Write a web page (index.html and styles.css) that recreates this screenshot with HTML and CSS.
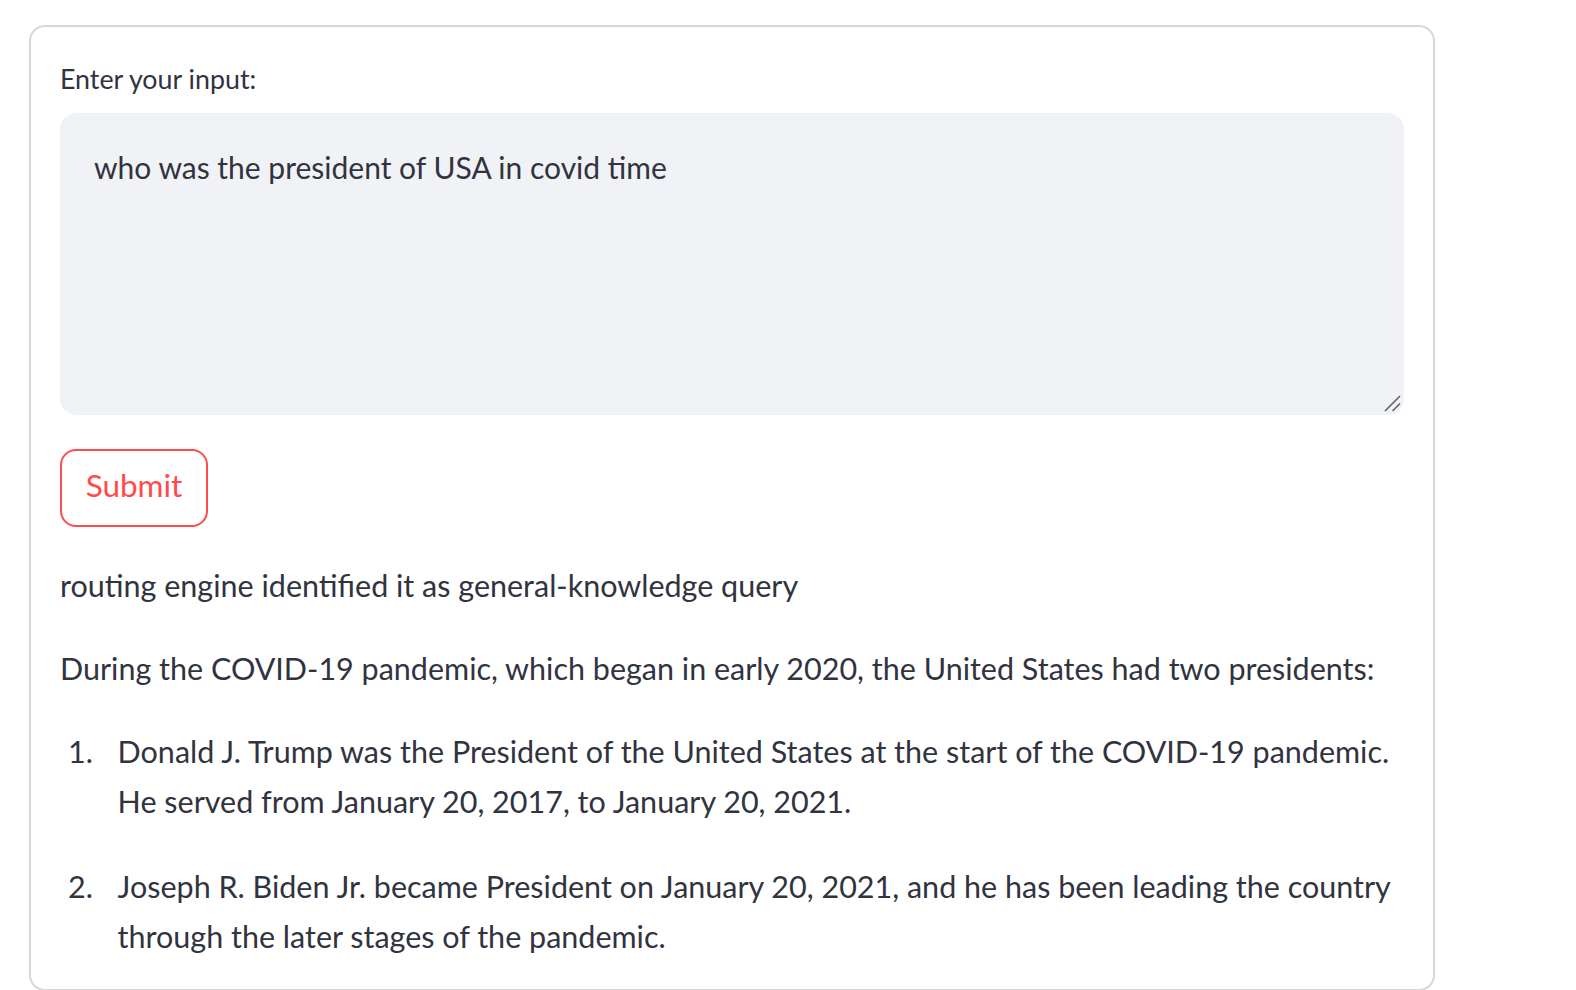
FILE: index.html
```html
<!DOCTYPE html>
<html lang="en">
<head>
<meta charset="utf-8">
<title>Query</title>
<link rel="stylesheet" href="styles.css">
</head>
<body>
<div class="page">
  <form class="card">
    <label class="field-label" for="q">Enter your input:</label>
    <div class="textarea-wrap">
      <textarea id="q" class="input">who was the president of USA in covid time</textarea>
      <svg class="resizer" width="18" height="18" viewBox="0 0 18 18" aria-hidden="true">
        <line x1="2" y1="16" x2="17" y2="1" stroke="#5f6068" stroke-width="1.6"/>
        <line x1="9.5" y1="16" x2="17" y2="8.5" stroke="#5f6068" stroke-width="1.6"/>
      </svg>
    </div>
    <div class="actions">
      <button type="button" class="submit">Submit</button>
    </div>
    <div class="output">
      <p>routing engine identified it as general-knowledge query</p>
      <p>During the COVID-19 pandemic, which began in early 2020, the United States had two presidents:</p>
      <ol class="answers">
        <li><span>Donald J. Trump was the President of the United States at the start of the COVID-19 pandemic. He served from January 20, 2017, to January 20, 2021.</span></li>
        <li><span>Joseph R. Biden Jr. became President on January 20, 2021, and he has been leading the country through the later stages of the pandemic.</span></li>
      </ol>
    </div>
  </form>
</div>
</body>
</html>
```
FILE: styles.css
```css
html, body {
  margin: 0;
  padding: 0;
  background: #ffffff;
}
body {
  font-family: "Lato", "Liberation Sans", sans-serif;
  color: #31333f;
  overflow: hidden;
}
.page {
  padding: 25px 0 0 29px;
}
.card {
  width: 1406px;
  box-sizing: border-box;
  border: 2px solid #d6d6d9;
  border-radius: 16px;
  padding: 34px 29px 28px 29px;
  display: flex;
  flex-direction: column;
}
.field-label {
  display: block;
  font-size: 26.8px;
  line-height: 36px;
  height: 36px;
  color: #31333f;
}
.textarea-wrap {
  position: relative;
  margin-top: 16px;
  height: 302px;
}
.input {
  display: block;
  box-sizing: border-box;
  width: 100%;
  height: 100%;
  margin: 0;
  border: 2px solid #f0f2f6;
  border-radius: 16px;
  background: #f0f2f6;
  padding: 29px 32px;
  font-family: "Lato", "Liberation Sans", sans-serif;
  font-size: 30px;
  line-height: 46px;
  color: #31333f;
  resize: none;
  outline: none;
}
.resizer {
  position: absolute;
  right: 3px;
  bottom: 2px;
}
.actions {
  margin-top: 34px;
  display: flex;
}
.submit {
  box-sizing: border-box;
  width: 148px;
  height: 78px;
  padding: 0 0 5px 0;
  border: 2px solid #ff4b4b;
  border-radius: 16px;
  background: #ffffff;
  color: #ff4b4b;
  font-family: "Lato", "Liberation Sans", sans-serif;
  font-size: 31.5px;
  line-height: 1;
  text-align: center;
  cursor: pointer;
}
.output {
  margin-top: 33px;
  font-size: 30.5px;
  line-height: 50px;
}
.output p {
  margin: 0 0 33px 0;
}
.answers {
  list-style: none;
  counter-reset: item;
  margin: 0;
  padding: 0;
}
.answers li {
  counter-increment: item;
  display: grid;
  grid-template-columns: 57.6px 1fr;
  margin-bottom: 35px;
}
.answers li:last-child {
  margin-bottom: 0;
}
.answers li::before {
  content: counter(item) ".";
  padding-left: 8px;
}
```
